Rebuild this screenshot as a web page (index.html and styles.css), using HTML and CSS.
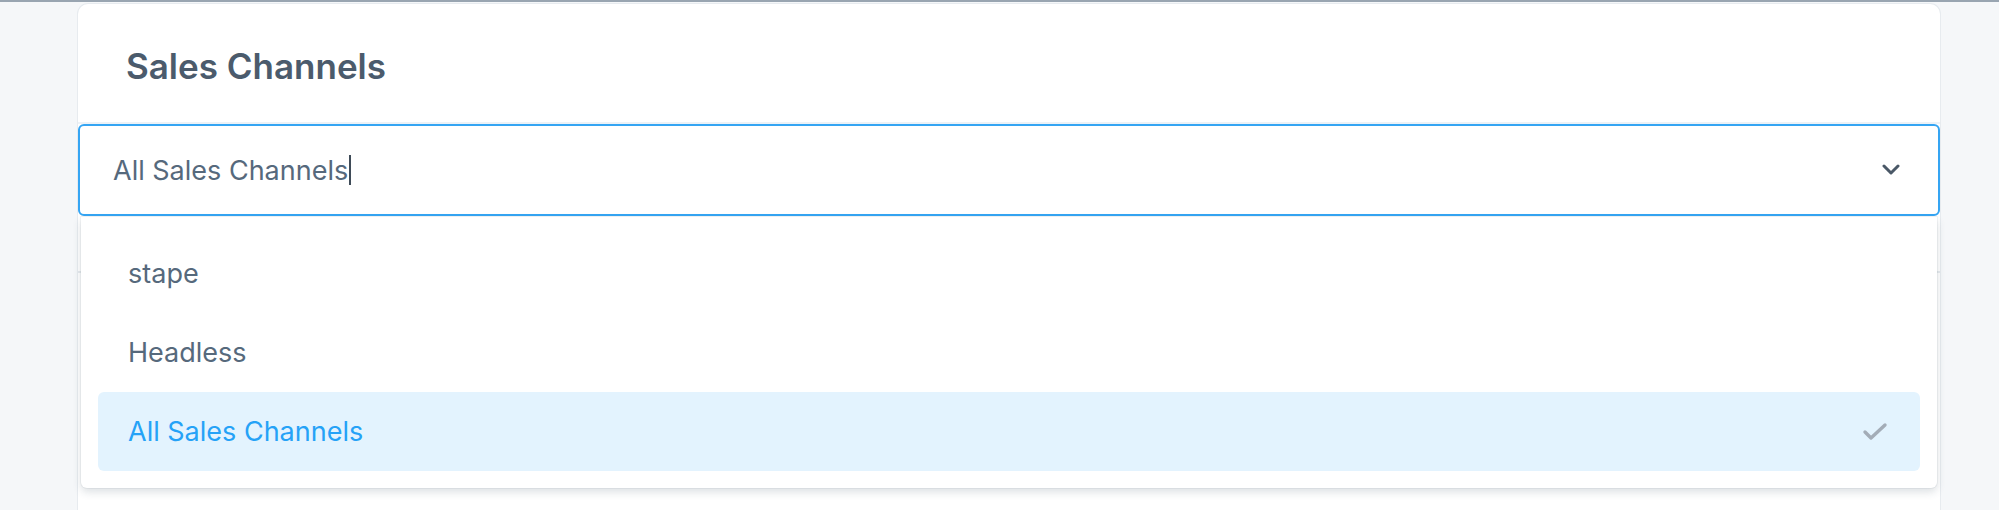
FILE: index.html
```
<!DOCTYPE html>
<html lang="en">
<head>
<meta charset="utf-8">
<title>Sales Channels</title>
<link rel="stylesheet" href="styles.css">
</head>
<body>
<div class="topbar"></div>
<main class="page">
  <section class="card">
    <header class="card-header">
      <h2 class="title">Sales Channels</h2>
    </header>
    <div class="select-wrap">
      <div class="select">
        <span class="select-value">All Sales Channels</span><span class="caret"></span>
        <svg class="chevron" width="18" height="12" viewBox="0 0 18 12"><polyline points="2,2 9,9 16,2" fill="none" stroke="#4a5867" stroke-width="3" stroke-linecap="round" stroke-linejoin="round"/></svg>
      </div>
      <ul class="dropdown">
        <li class="option">stape</li>
        <li class="option">Headless</li>
        <li class="option selected">All Sales Channels
          <svg class="check" width="26" height="20" viewBox="0 0 26 20"><polyline points="3,10 9,16 23,3" fill="none" stroke="#a3acb7" stroke-width="3.4" stroke-linecap="round" stroke-linejoin="round"/></svg>
        </li>
      </ul>
    </div>
    <div class="card-body"></div>
    <div class="card-section"></div>
  </section>
</main>
</body>
</html>
```
FILE: styles.css
```
html, body {
  margin: 0;
  padding: 0;
  height: 100%;
  overflow: hidden;
}
body {
  background: #f5f7f9;
  font-family: Inter, "Noto Sans", sans-serif;
  color: #56697c;
}
.topbar {
  height: 2px;
  background: #99a5b1;
}
.page {
  padding: 2px 59px 0 78px;
}
.card {
  background: #ffffff;
  border-radius: 10px 10px 0 0;
  box-shadow: 0 0 0 1px #e7ebef;
  min-height: 520px;
}
.card-header {
  height: 120px;
  display: flex;
  align-items: center;
  padding: 6px 0 0 48px;
  border-bottom: 2px solid #edf2f7;
  box-sizing: border-box;
}
.title {
  margin: 0;
  font-size: 35px;
  font-weight: 600;
  color: #4b5b6c;
  letter-spacing: 0;
}
.select-wrap {
  position: relative;
}
.select {
  height: 92px;
  box-sizing: border-box;
  border: 2px solid #35a5f3;
  border-radius: 6px;
  display: flex;
  align-items: center;
  padding: 0 38px 0 33px;
  font-size: 27px;
  color: #56697c;
}
.caret {
  display: inline-block;
  width: 2px;
  height: 30px;
  background: #3f4b58;
  margin-left: 1px;
}
.chevron {
  margin-left: auto;
}
.dropdown {
  position: absolute;
  top: 93px;
  left: 3px;
  right: 3px;
  margin: 0;
  padding: 17px;
  list-style: none;
  background: #ffffff;
  border-radius: 0 0 6px 6px;
  box-shadow: 0 4px 8px rgba(40, 60, 80, 0.16), 0 0 0 1px rgba(40, 60, 80, 0.05);
  z-index: 2;
}
.option {
  height: 79px;
  display: flex;
  align-items: center;
  padding: 0 32px 0 30px;
  font-size: 27px;
  color: #56697c;
  border-radius: 6px;
}
.option.selected {
  background: #e3f3fe;
  color: #25a2f7;
}
.check {
  margin-left: auto;
}
.card-body {
  height: 55px;
  border-bottom: 2px solid #e7ebef;
}
.card-section {
  height: 200px;
}
```
